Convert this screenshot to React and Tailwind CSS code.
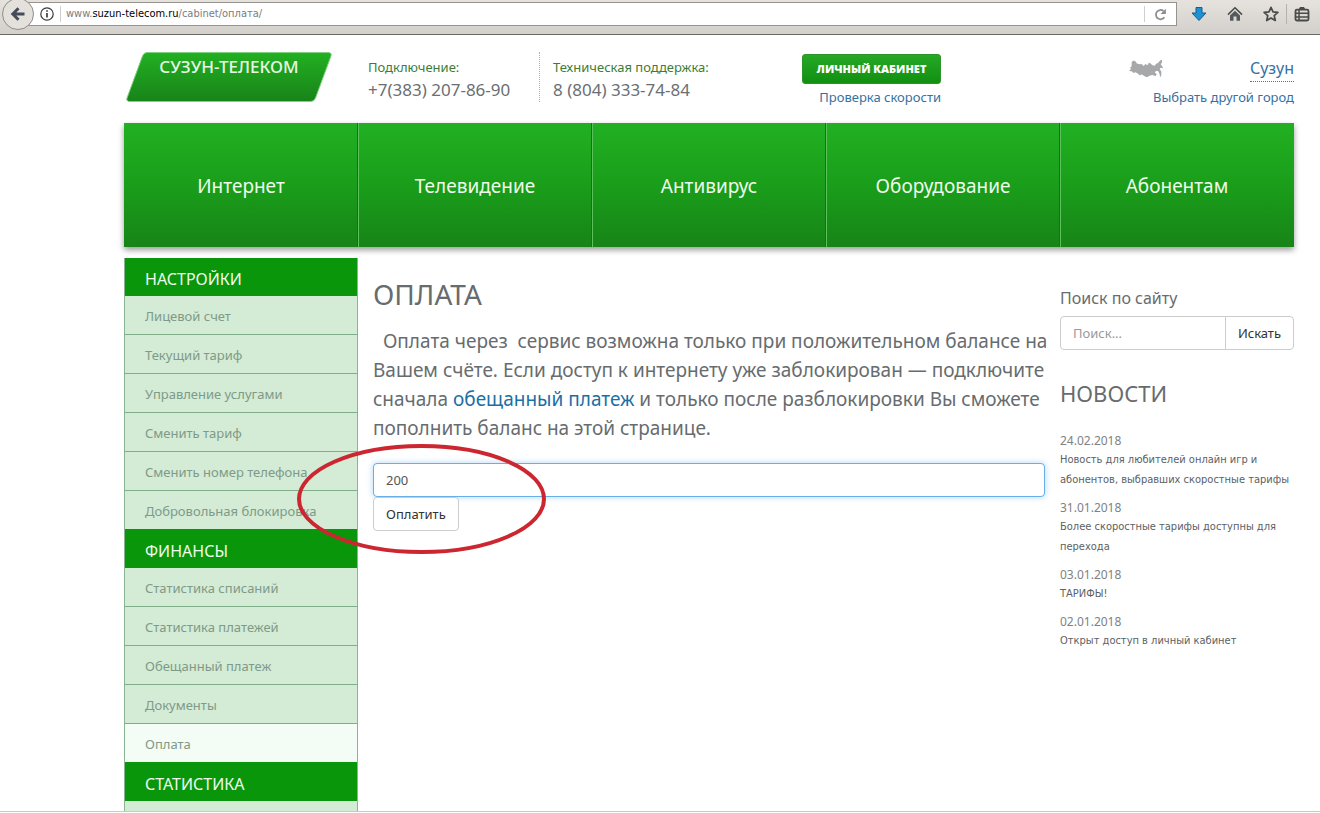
import React, { useState } from "react";

const NAV = ["Интернет", "Телевидение", "Антивирус", "Оборудование", "Абонентам"];

const MENU = [
  {
    title: "НАСТРОЙКИ",
    items: [
      "Лицевой счет",
      "Текущий тариф",
      "Управление услугами",
      "Сменить тариф",
      "Сменить номер телефона",
      "Добровольная блокировка",
    ],
  },
  {
    title: "ФИНАНСЫ",
    items: ["Статистика списаний", "Статистика платежей", "Обещанный платеж", "Документы", "Оплата"],
  },
  { title: "СТАТИСТИКА", items: [] },
];

const NEWS = [
  { date: "24.02.2018", lines: ["Новость для любителей онлайн игр и", "абонентов, выбравших скоростные тарифы"] },
  { date: "31.01.2018", lines: ["Более скоростные тарифы доступны для", "перехода"] },
  { date: "03.01.2018", lines: ["ТАРИФЫ!"] },
  { date: "02.01.2018", lines: ["Открыт доступ в личный кабинет"] },
];

function BrowserBar() {
  return (
    <div className="flex h-[35px] shrink-0 items-start border-b border-[#6b6967] bg-gradient-to-b from-[#e6e3de] to-[#d3cfca]">
      <button aria-label="Назад" className="relative z-10 -mt-[2px] ml-[2px] flex size-8 shrink-0 items-center justify-center rounded-full border border-[#8f8d89] bg-[#e4e1dc]">
        <svg viewBox="0 0 16 16" className="size-4" fill="none" stroke="#454b58" strokeWidth="3">
          <path d="M8.5 2.200 2.800 8l5.700 5.800M3 8h11.500" />
        </svg>
      </button>
      <div className="-ml-2 mt-[2px] flex h-6 min-w-0 flex-1 items-center border border-[#96938f] bg-white pl-3">
        <svg viewBox="0 0 14 14" className="ml-px size-[14px] shrink-0">
          <circle cx="7" cy="7" r="6.2" fill="none" stroke="#3a3a3a" strokeWidth="1.2" />
          <path d="M6.2 6h1.6v4.5H6.2zM6.2 3.2h1.6v1.6H6.2z" fill="#333" />
        </svg>
        <span className="ml-[6px] h-4 w-px bg-[#cfcfcf]" />
        <span className="ml-[5px] flex-1 truncate font-['DejaVu_Sans_Condensed','DejaVu_Sans',sans-serif] text-[11px] leading-4 text-[#7c7c7c]">
          www.<span className="text-black">suzun-telecom.ru</span>/cabinet/оплата/
        </span>
        <button aria-label="Обновить" className="flex h-4 w-8 items-center justify-center border-l border-[#cfcfcf]">
          <svg viewBox="0 0 14 14" className="size-[13px]" fill="none" stroke="#8d8d8d" strokeWidth="1.9">
            <path d="M11.200 10A5 5 0 1 1 10.200 3.200" />
            <path d="M12.800 .8v5.700H7z" fill="#8d8d8d" stroke="none" />
          </svg>
        </button>
      </div>
      <div className="flex h-7 shrink-0 items-center pl-[14px] pr-[10px]">
        <button aria-label="Загрузки">
          <svg viewBox="0 0 16 16" className="size-4">
            <path d="M5 1.500h6v5.500h4L8 14.500 1 7h4z" fill="#1893d6" stroke="#22598a" strokeWidth="1" />
          </svg>
        </button>
        <button aria-label="Домой" className="ml-5">
          <svg viewBox="0 0 16 16" className="size-4">
            <path d="M1 8.6 8 1.8l7 6.8" fill="none" stroke="#4a4a4a" strokeWidth="1.5" />
            <path d="M3 9.500l5-4.800 5 4.800v5.300H9.500V10.500h-3v4.300H3z" fill="#55585c" />
          </svg>
        </button>
        <button aria-label="В закладки" className="ml-5">
          <svg viewBox="0 0 16 16" className="size-4">
            <path d="M8 1.3l2 4.5 4.9.5-3.7 3.3 1.1 4.9L8 12l-4.3 2.5 1.1-4.9L1.1 6.3 6 5.8z" fill="none" stroke="#4a4a4a" strokeWidth="1.7" strokeLinejoin="round" />
          </svg>
        </button>
        <span className="ml-[7px] h-5 w-px bg-[#b5b2ad]" />
        <button aria-label="Список закладок" className="ml-[7px]">
          <svg viewBox="0 0 16 16" className="size-4">
            <rect x="1.5" y="3.7" width="13" height="10.8" rx="1.5" fill="none" stroke="#4a4a4a" strokeWidth="1.8" />
            <path d="M4.500 3.700 6 1h4l1.500 2.700z" fill="#4a4a4a" />
            <path d="M1 7.300h14M1 10.900h14M5 4v10.500" stroke="#4a4a4a" strokeWidth="1.500" />
          </svg>
        </button>
      </div>
    </div>
  );
}

function Logo() {
  return (
    <a href="#" className="relative ml-[2px] block h-[50px] w-[206px] shrink-0">
      <svg viewBox="0 0 206 50" className="absolute inset-0 size-full">
        <defs>
          <linearGradient id="logoFill" x1="0" y1="0" x2="0" y2="1">
            <stop offset="0" stopColor="#22b022" />
            <stop offset="1" stopColor="#188318" />
          </linearGradient>
        </defs>
        <path d="M21 .5H202q4 0 3 3.5L189.500 46q-1.500 3.500-5 3.500H4q-4 0-3-3.500L16.500 4Q18 .5 21 .5z" fill="url(#logoFill)" stroke="#7fd07f" strokeWidth="1" />
      </svg>
      <span className="relative block pt-[5px] text-center text-[17px] font-medium leading-5 text-[#e6f8e4]">СУЗУН-ТЕЛЕКОМ</span>
    </a>
  );
}

function RussiaMap() {
  return (
    <svg viewBox="0 0 103 57" className="h-[19px] w-[34px] shrink-0" fill="#a6a8aa">
      <path d="M0 36L6 30 3 26 8 22 8 9 14 4 20 7 24 13 32 16 38 15 44 21 50 15 56 19 60 11 66 13 70 18 78 20 82 14 88 12 94 4 100 2 100 10 96 16 101 22 103 28 96 26 93 30 98 38 98 48 95 55 92 44 88 36 82 36 78 40 84 46 80 52 72 48 64 50 54 55 46 51 38 46 34 50 26 44 20 40 14 42 8 37z" />
    </svg>
  );
}

function Header() {
  return (
    <header className="flex h-[88px] shrink-0 items-start pt-[17px]">
      <Logo />
      <div className="ml-9 flex">
        <div className="w-[172px] border-r border-dotted border-[#9fb79f] pt-[5px]">
          <div className="text-[13px] leading-5 text-[#3b7d35]">Подключение:</div>
          <div className="text-[17px] leading-[25px] text-[#6a6f73]">+7(383) 207-86-90</div>
        </div>
        <div className="whitespace-nowrap pl-[13px] pt-[5px]">
          <div className="text-[13px] leading-5 text-[#3b7d35]">Техническая поддержка:</div>
          <div className="text-[17px] leading-[25px] text-[#6a6f73]">8 (804) 333-74-84</div>
        </div>
      </div>
      <div className="ml-auto flex flex-col items-end pt-[2px]">
        <a href="#" className="flex h-[30px] w-[139px] items-center justify-center whitespace-nowrap rounded-[3px] border border-[#2a962a] bg-gradient-to-b from-[#25a825] to-[#118f11] font-['Open_Sans','Noto_Sans',sans-serif] text-[11px] font-extrabold text-white">
          ЛИЧНЫЙ КАБИНЕТ
        </a>
        <a href="#" className="mt-[3px] whitespace-nowrap text-[13px] leading-5 text-[#35719f]">Проверка скорости</a>
      </div>
      <div className="ml-[188px] flex w-[165px] flex-col items-end">
        <div className="flex w-full items-start justify-between">
          <div className="pt-[7px]"><RussiaMap /></div>
          <a href="#" className="mt-[3px] border-b border-dotted border-[#2f9a2f] text-[16px] leading-[26px] text-[#35719f]">Сузун</a>
        </div>
        <a href="#" className="mt-[5px] whitespace-nowrap text-[13px] leading-5 text-[#35719f]">Выбрать другой город</a>
      </div>
    </header>
  );
}

function TopNav() {
  return (
    <nav className="grid h-[124px] shrink-0 grid-cols-5 bg-gradient-to-b from-[#22b022] via-[#1a9e1a] to-[#178417] shadow-[0_3px_6px_rgba(0,0,0,0.4)]">
      {NAV.map((n) => (
        <a
          key={n}
          href="#"
          className="flex items-center justify-center border-l border-r border-l-[#5cc05c] border-r-[#127512] pt-px text-[19px] leading-7 text-[#eefbed] first:border-l-transparent last:border-r-transparent"
        >
          {n}
        </a>
      ))}
    </nav>
  );
}

function Sidebar() {
  return (
    <nav className="w-1/5 shrink-0">
      <div className="border-l border-r border-[#8ab592]">
        {MENU.map((g) => (
          <section key={g.title} className="bg-[#d4ebd5] last:pb-10">
            <h2 className="h-[38px] bg-[#0a960a] pl-5 pt-[2px] text-[16px] leading-[38px] text-[#eefbed]">{g.title}</h2>
            <ul>
              {g.items.map((it) => (
                <li key={it} className="border-b border-[#7fae88] last:border-[#0a960a]">
                  <a
                    href="#"
                    className={
                      "block h-[38px] whitespace-nowrap pl-5 pt-[1px] text-[13px] leading-[38px] text-[#7e9a88] " +
                      (it === "Оплата" ? "bg-[#f4fcf6]" : "bg-[#d4ebd5]")
                    }
                  >
                    {it}
                  </a>
                </li>
              ))}
            </ul>
          </section>
        ))}
      </div>
    </nav>
  );
}

function Payment() {
  const [sum, setSum] = useState("200");
  return (
    <main className="w-3/5 px-[15px] pt-5 text-[#676c6f]">
      <h1 className="text-[28px] leading-8">ОПЛАТА</h1>
      <p className="mt-[17px] whitespace-nowrap text-[19px] leading-[29px]">
        &nbsp; Оплата через&nbsp; сервис возможна только при положительном балансе на
        <br />
        Вашем счёте. Если доступ к интернету уже заблокирован — подключите
        <br />
        сначала <a href="#" className="text-[#1b6fa5]">обещанный платеж</a> и только после разблокировки Вы сможете
        <br />
        пополнить баланс на этой странице.
      </p>
      <form className="relative mt-5" onSubmit={(e) => e.preventDefault()}>
        <input
          aria-label="Сумма платежа"
          value={sum}
          onChange={(e) => setSum(e.target.value)}
          className="block h-[34px] w-full rounded-[4px] border border-[#66afe9] bg-white px-3 text-[13px] text-[#555] shadow-[0_0_6px_rgba(102,175,233,0.5)] outline-none"
        />
        <button className="block h-[34px] rounded-[4px] border border-[#ccc] bg-white px-3 pt-px text-[13px] text-[#333]">Оплатить</button>
        <svg viewBox="0 0 250 112" className="pointer-events-none absolute -left-[76px] -top-[20px] h-[112px] w-[250px]">
          <ellipse cx="124.500" cy="56" rx="122.500" ry="53" fill="none" stroke="#cc2630" strokeWidth="4" />
        </svg>
      </form>
    </main>
  );
}

function Aside() {
  return (
    <aside className="w-1/5 shrink-0 pt-[27px] text-[#676c6f]">
      <label htmlFor="site-search" className="block text-[16px] leading-[26px]">Поиск по сайту</label>
      <form className="mt-[5px] flex" onSubmit={(e) => e.preventDefault()}>
        <input
          id="site-search"
          placeholder="Поиск..."
          className="h-[34px] min-w-0 flex-1 rounded-l-[4px] border border-[#ccc] bg-white px-3 text-[13px] outline-none placeholder:text-[#999]"
        />
        <button className="-ml-px h-[34px] rounded-r-[4px] border border-[#ccc] bg-white px-3 pt-px text-[13px] text-[#333]">Искать</button>
      </form>
      <h2 className="mt-[27px] text-[22px] leading-8">НОВОСТИ</h2>
      <ul className="mt-[23px] space-y-[9px]">
        {NEWS.map((n) => (
          <li key={n.date} className="whitespace-nowrap">
            <time className="block text-[12px] leading-[18px] text-[#7d8285]">{n.date}</time>
            <a href="#" className="block font-['DejaVu_Sans_Condensed','DejaVu_Sans',sans-serif] text-[11px] leading-5 text-[#5c6164]">
              {n.lines.map((l) => (
                <span key={l} className="block">{l}</span>
              ))}
            </a>
          </li>
        ))}
      </ul>
    </aside>
  );
}

export default function App() {
  return (
    <div className="flex h-screen flex-col overflow-hidden bg-white pb-px font-['Noto_Sans','Open_Sans',sans-serif]">
      <BrowserBar />
      <div className="min-h-0 flex-1 overflow-hidden border-b border-[#c9c9c9] pl-[124px] pr-[26px]">
        <Header />
        <TopNav />
        <div className="mt-[11px] flex items-start">
          <Sidebar />
          <Payment />
          <Aside />
        </div>
      </div>
    </div>
  );
}
